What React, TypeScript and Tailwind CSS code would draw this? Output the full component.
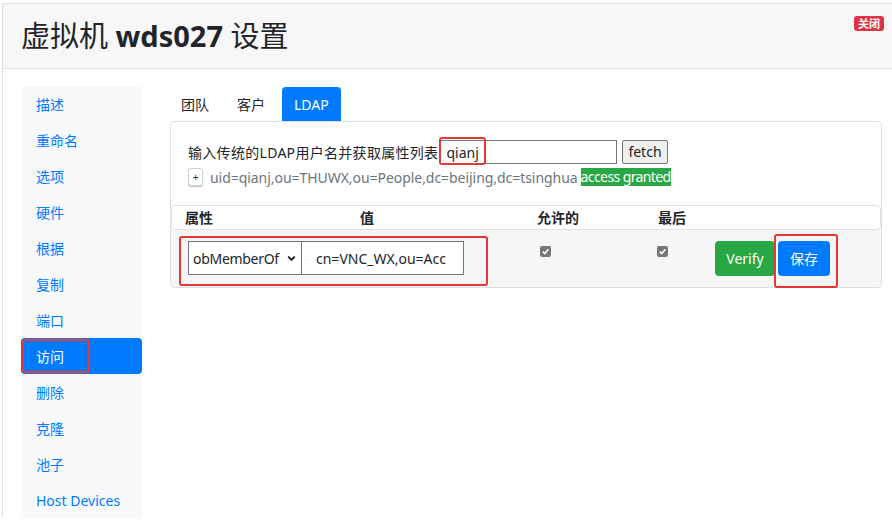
import { ChevronDown } from 'lucide-react';

const font = "font-['Noto_Sans','Noto_Sans_CJK_SC',sans-serif]";

const menu = ['描述', '重命名', '选项', '硬件', '根据', '复制', '端口', '访问', '删除', '克隆', '池子', 'Host Devices'];

function Check() {
  return (
    <span className="flex h-[11px] w-[11px] items-center justify-center rounded-[2px] bg-[#767676]">
      <svg viewBox="0 0 10 10" className="h-[9px] w-[9px]">
        <path d="M2 5.2 L4.2 7.4 L8.2 2.6" fill="none" stroke="white" strokeWidth="1.8" />
      </svg>
    </span>
  );
}

export default function App() {
  return (
    <div className={`relative min-h-screen bg-white pl-[2px] pt-[3px] text-[14px] text-[#212529] ${font}`}>
      <div className="w-[900px] border-l border-t border-[#dee2e6]">
        {/* Header */}
        <div className="flex h-[65px] items-start justify-between border-b border-[#dee2e6] bg-[#f7f7f7] pl-[18px]">
          <h1 className="mt-[13px] text-[29px] leading-[38px]">
            虚拟机 <span className="font-bold">wds027</span> 设置
          </h1>
          <span className="mr-[18px] mt-[12px] rounded-[3px] bg-[#dc3545] px-[4px] text-[11px] font-bold leading-[15px] text-white">
            关闭
          </span>
        </div>

        {/* Body */}
        <div className="flex pl-[18px] pt-[17px]">
          <div className="w-[121px] bg-[#f8f9fa]">
            {menu.map((m) => (
              <div
                key={m}
                className={`flex h-[36px] items-center px-[15px] ${
                  m === '访问' ? 'rounded-[4px] bg-[#007bff] text-white' : 'text-[#007bff]'
                }`}
              >
                {m}
              </div>
            ))}
          </div>

          <div className="ml-[28px] mt-[1px] w-[712px]">
            {/* Tabs */}
            <div className="flex h-[34px] gap-[4px]">
              <div className="flex items-center pl-[11px] pr-[13px]">团队</div>
              <div className="flex items-center pl-[11px] pr-[13px]">客户</div>
              <div className="flex items-center rounded-t-[4px] bg-[#007bff] px-[12px] text-white">LDAP</div>
            </div>

            {/* Card */}
            <div className="rounded-[4px] border border-[#dfdfdf]">
              <div className="pl-[17px] pt-[18px]">
                <div className="flex h-[24px] items-center">
                  <span className="tracking-[0.3px]">输入传统的LDAP用户名并获取属性列表</span>
                  <input
                    readOnly
                    value="qianj"
                    className="ml-[2px] h-[24px] w-[177px] border border-[#767676] px-[5px] outline-none"
                  />
                  <button className="ml-[5px] h-[24px] rounded-[2px] border border-[#767676] bg-[#efefef] px-[5px] leading-[20px]">
                    fetch
                  </button>
                </div>
                <div className="mt-[4px] flex h-[18px] items-center">
                  <button className="flex h-[18px] w-[15px] items-center justify-center rounded-[3px] border border-[#d0d0d0] bg-white text-[10px] shadow-[0_1px_1px_rgba(0,0,0,0.25)]">
                    +
                  </button>
                  <span className="ml-[7px] tracking-[-0.05px] text-[#6c757d]">
                    uid=qianj,ou=THUWX,ou=People,dc=beijing,dc=tsinghua
                  </span>
                  <span className="ml-[3px] bg-[#28a745] leading-[18px] tracking-[-0.6px] text-white">access granted</span>
                </div>
              </div>

              {/* Table */}
              <div className="mt-[19px]">
                <div className="grid h-[25px] grid-cols-[175px_177px_121px_57px_1fr] items-center rounded-[4px] border border-[#dee2e6] font-bold">
                  <span className="pl-[13px]">属性</span>
                  <span className="pl-[13px]">值</span>
                  <span className="pl-[13px]">允许的</span>
                  <span className="pl-[13px]">最后</span>
                  <span />
                </div>
                <div className="grid h-[57px] grid-cols-[175px_177px_121px_57px_1fr] rounded-b-[4px] bg-[#f6f6f6]">
                  <div className="col-span-2 flex pl-[17px] pt-[11px]">
                    <div className="flex h-[34px] w-[114px] items-center border border-[#767676] bg-white pl-[4px]">
                      <span className="tracking-[-0.3px]">obMemberOf</span>
                      <ChevronDown className="ml-auto mr-[4px] h-[11px] w-[11px]" strokeWidth={4.5} />
                    </div>
                    <div className="flex h-[34px] w-[162px] items-center border border-l-0 border-[#767676] bg-white pl-[14px]">
                      cn=VNC_WX,ou=Acc
                    </div>
                  </div>
                  <div className="pl-[17px] pt-[16px]">
                    <Check />
                  </div>
                  <div className="pl-[13px] pt-[16px]">
                    <Check />
                  </div>
                  <div className="flex gap-[3px] pl-[14px] pt-[11px]">
                    <button className="h-[35px] w-[60px] rounded-[4px] bg-[#28a745] text-white">Verify</button>
                    <button className="h-[35px] w-[52px] rounded-[4px] bg-[#007bff] text-white">保存</button>
                  </div>
                </div>
              </div>
            </div>
          </div>
        </div>
      </div>

      {/* Red annotation boxes */}
      <div className="absolute left-[22px] top-[339px] h-[34px] w-[68px] rounded-[3px] border-2 border-[#e53935]" />
      <div className="absolute left-[439px] top-[137px] h-[28px] w-[47px] rounded-[3px] border-2 border-[#e53935]" />
      <div className="absolute left-[179px] top-[236px] h-[50px] w-[309px] rounded-[3px] border-2 border-[#e53935]" />
      <div className="absolute left-[774px] top-[234px] h-[54px] w-[64px] rounded-[3px] border-2 border-[#e53935]" />
    </div>
  );
}
